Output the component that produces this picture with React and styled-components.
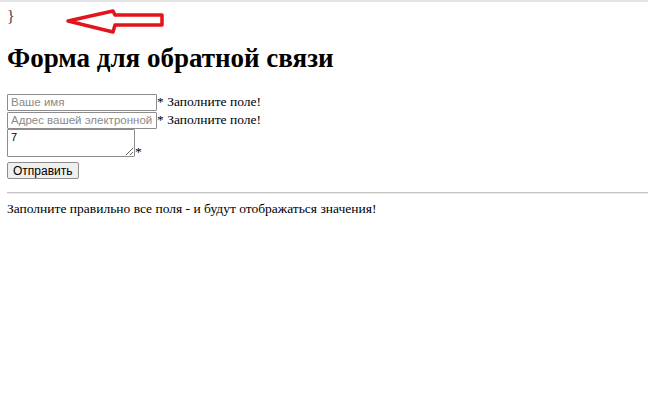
import React from "react"
import styled, { createGlobalStyle } from "styled-components"

const GlobalStyle = createGlobalStyle`
  html, body {
    margin: 0;
    background: #fff;
  }
  body {
    font-family: "Liberation Serif", "Times New Roman", serif;
    font-size: 13.5px;
    color: #000;
  }
`

const TopEdge = styled.div`
  height: 2px;
  background: #e4e4e4;
`

const Page = styled.div`
  padding: 0 0 0 7px;
`

const CodeLine = styled.div`
  position: relative;
  margin-top: 6px;
  height: 18px;
  font-size: 16px;
  line-height: 18px;
  color: #444;
`

const Arrow = styled.svg`
  position: absolute;
  left: 57px;
  top: 0;
`

const Title = styled.h2`
  margin: 17px 0 20px;
  font-size: 27px;
  line-height: 30px;
  font-weight: bold;
`

const Form = styled.form`
  margin: 0;
`

const Row = styled.div`
  display: flex;
  align-items: ${p => p.$align || "baseline"};
  height: ${p => p.$h || 18}px;
  line-height: 18px;
  white-space: nowrap;
`

const Mark = styled.span`
  align-self: flex-end;
`

const Field = styled.input`
  box-sizing: border-box;
  width: 150px;
  height: 17px;
  padding: 0 3px;
  margin: 0;
  border: 1px solid #8d8d8d;
  border-radius: 1px;
  font-family: "Liberation Sans", Arial, sans-serif;
  font-size: 11.5px;

  &::placeholder {
    color: #8a8a8a;
  }
`

const Message = styled.textarea`
  box-sizing: border-box;
  width: 128px;
  height: 28px;
  padding: 1px 3px;
  margin: 0;
  border: 1px solid #8d8d8d;
  border-radius: 1px;
  font-family: "Liberation Sans", Arial, sans-serif;
  font-size: 11px;
  line-height: 13px;
`

const SendButton = styled.button`
  box-sizing: border-box;
  height: 17px;
  margin-top: 1px;
  padding: 0 5px;
  border: 1px solid #8d8d8d;
  border-radius: 2px;
  background: #efefef;
  font-family: "Liberation Sans", Arial, sans-serif;
  font-size: 12px;
  line-height: 14px;
  color: #000;
`

const Divider = styled.hr`
  margin: 13px 0 6px;
  border: 0;
  border-top: 1px solid #c4c4c4;
  border-bottom: 1px solid #ececec;
  height: 0;
`

const Result = styled.p`
  margin: 0;
  line-height: 18px;
`

export default function App() {
  return (
    <>
      <GlobalStyle />
      <TopEdge />
      <Page>
        <CodeLine>
          {"}"}
          <Arrow width="104" height="28" viewBox="0 0 104 28">
            <polygon
              points="4,13 49,3 51,7 98,7 98,17 51,17 49,24"
              fill="#fff"
              stroke="#e3141b"
              strokeWidth="3.5"
              strokeLinejoin="round"
            />
          </Arrow>
        </CodeLine>
        <Title>Форма для обратной связи</Title>
        <Form onSubmit={e => e.preventDefault()}>
          <Row>
            <Field type="text" placeholder="Ваше имя" />
            <span>* Заполните поле!</span>
          </Row>
          <Row>
            <Field type="text" placeholder="Адрес вашей электронной почты" />
            <span>* Заполните поле!</span>
          </Row>
          <Row $align="flex-start" $h={32}>
            <Message defaultValue="7" />
            <Mark>*</Mark>
          </Row>
          <Row $align="flex-start">
            <SendButton type="submit">Отправить</SendButton>
          </Row>
        </Form>
        <Divider />
        <Result>Заполните правильно все поля - и будут отображаться значения!</Result>
      </Page>
    </>
  )
}
